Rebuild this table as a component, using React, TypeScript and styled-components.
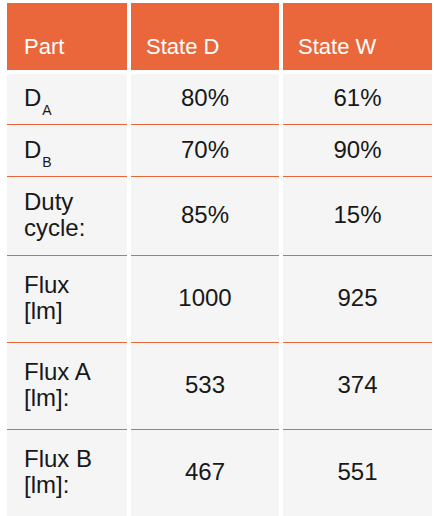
import type { ReactNode } from 'react';
import styled, { createGlobalStyle } from 'styled-components';

const GlobalStyle = createGlobalStyle`
    html, body {
        margin: 0;
        padding: 0;
        background: #ffffff;
    }
    body {
        font-family: "Liberation Sans", Arial, sans-serif;
    }
`;

const Sub = styled.sub`
    font-size: 14px;
    line-height: 0;
    vertical-align: -9px;
    margin-left: 1px;
`;

type RowData = {
    part: ReactNode;
    d: string;
    w: string;
    height: number;
};

const rows: RowData[] = [
    { part: <>D<Sub>A</Sub></>, d: '80%', w: '61%', height: 51 },
    { part: <>D<Sub>B</Sub></>, d: '70%', w: '90%', height: 52 },
    { part: <>Duty<br />cycle:</>, d: '85%', w: '15%', height: 79 },
    { part: <>Flux<br />[lm]</>, d: '1000', w: '925', height: 87 },
    { part: <>Flux A<br />[lm]:</>, d: '533', w: '374', height: 87 },
    { part: <>Flux B<br />[lm]:</>, d: '467', w: '551', height: 87 },
];

const Page = styled.div`
    padding: 3px 2px 0 7px;
    height: 516px;
    box-sizing: border-box;
    overflow: hidden;
`;

const Table = styled.div`
    width: 425px;
    display: flex;
    flex-direction: column;
`;

const HeaderRow = styled.div`
    display: grid;
    grid-template-columns: 120px 148px 149px;
    column-gap: 4px;
    height: 67px;
    margin-bottom: 4px;
`;

const HeadCell = styled.div<{ $first?: boolean }>`
    background: #e9673a;
    color: #ffffff;
    font-size: 22px;
    line-height: 25px;
    display: flex;
    align-items: flex-end;
    padding: 0 0 11px ${({ $first }) => ($first ? '17px' : '15px')};
`;

const Row = styled.div<{ $h: number }>`
    display: grid;
    grid-template-columns: 120px 148px 149px;
    column-gap: 4px;
    height: ${({ $h }) => $h}px;
    flex-shrink: 0;
`;

const Cell = styled.div`
    background: #f5f5f5;
    border-bottom: 1px solid #e9673a;
    color: #181818;
    font-size: 24px;
    line-height: 26px;
    display: flex;
    align-items: center;
`;

const LabelCell = styled(Cell)`
    padding-left: 17px;
    padding-bottom: 2px;
`;

const ValueCell = styled(Cell)`
    justify-content: center;
    padding-bottom: 2px;
`;

const App = () => {
    return (
        <>
            <GlobalStyle />
            <Page>
                <Table>
                    <HeaderRow>
                        <HeadCell $first>Part</HeadCell>
                        <HeadCell>State D</HeadCell>
                        <HeadCell>State W</HeadCell>
                    </HeaderRow>
                    {rows.map((row, i) => (
                        <Row key={i} $h={row.height}>
                            <LabelCell>
                                <span>{row.part}</span>
                            </LabelCell>
                            <ValueCell>{row.d}</ValueCell>
                            <ValueCell>{row.w}</ValueCell>
                        </Row>
                    ))}
                </Table>
            </Page>
        </>
    );
};

export default App;
